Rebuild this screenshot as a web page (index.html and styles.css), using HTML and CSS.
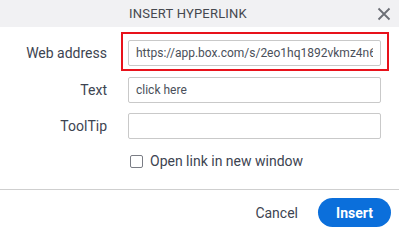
FILE: index.html
```html
<!DOCTYPE html>
<html lang="en">
<head>
    <meta charset="UTF-8">
    <meta name="viewport" content="width=device-width, initial-scale=1.0">
    <title>Insert Hyperlink</title>
    <link rel="stylesheet" href="styles.css">
</head>
<body>
    <div class="dialog">
        <div class="dialog-header">
            <span class="dialog-title">INSERT HYPERLINK</span>
            <button class="close-btn" aria-label="Close">
                <svg width="14" height="14" viewBox="0 0 14 14">
                    <path d="M1.5 1.5 L12.5 12.5 M12.5 1.5 L1.5 12.5" stroke="#6b6e75" stroke-width="1.8" fill="none"/>
                </svg>
            </button>
        </div>

        <div class="dialog-body">
            <div class="form-grid">
                <label class="field-label" for="url">Web address</label>
                <input class="field-input" id="url" type="text" value="https://app.box.com/s/2eo1hq1892vkmz4n6t">

                <label class="field-label" for="text">Text</label>
                <input class="field-input" id="text" type="text" value="click here">

                <label class="field-label" for="tooltip">ToolTip</label>
                <input class="field-input" id="tooltip" type="text" value="">

                <span></span>
                <label class="check-row">
                    <span class="check-box"></span>
                    Open link in new window
                </label>
            </div>
            <!-- annotation around the first field -->
            <div class="highlight"></div>
        </div>

        <div class="dialog-footer">
            <button class="btn-cancel">Cancel</button>
            <button class="btn-insert">Insert</button>
        </div>
    </div>
</body>
</html>
```

FILE: styles.css
```css
* {
    margin: 0;
    padding: 0;
    box-sizing: border-box;
}

body {
    font-family: Roboto, 'Liberation Sans', sans-serif;
    background: #fff;
    color: #3d4451;
}

.dialog {
    width: 399px;
    height: 233px;
    background: #fff;
    position: relative;
}

.dialog-header {
    height: 27px;
    background: #f1f1f3;
    display: flex;
    align-items: center;
    justify-content: center;
    padding-right: 23px;
    position: relative;
}

.dialog-title {
    font-size: 13px;
    color: #45484f;
    letter-spacing: 0.2px;
}

.close-btn {
    position: absolute;
    right: 8px;
    top: 7px;
    width: 14px;
    height: 14px;
    border: none;
    background: none;
    display: flex;
}

.dialog-body {
    position: relative;
    padding-top: 13px;
    height: 161px;
}

.form-grid {
    display: grid;
    grid-template-columns: 107px 253px;
    grid-template-rows: 26px 26px 26px 20px;
    column-gap: 21px;
    row-gap: 10.5px;
    align-items: center;
}

.form-grid .check-row {
    margin-top: 3px;
}

.field-label {
    font-size: 14px;
    text-align: right;
    color: #3d4451;
}

.field-input {
    height: 26px;
    width: 253px;
    border: 1px solid #c9c9c9;
    border-radius: 2px;
    padding: 0 7px;
    font-family: Roboto, 'Liberation Sans', sans-serif;
    font-size: 12px;
    color: #4a4f5a;
    outline: none;
}

.check-row {
    display: flex;
    align-items: center;
    gap: 7px;
    font-size: 14px;
    color: #3d4451;
    padding-left: 2px;
}

.check-box {
    width: 13px;
    height: 13px;
    border: 1px solid #7a7d85;
    border-radius: 2px;
    background: #fff;
}

.highlight {
    position: absolute;
    left: 121px;
    top: 5px;
    width: 268px;
    height: 39px;
    border: 2px solid #e8121b;
    pointer-events: none;
}

.dialog-footer {
    border-top: 1px solid #cfcfcf;
    margin-top: 1px;
    display: flex;
    justify-content: flex-end;
    align-items: center;
    gap: 20px;
    padding: 8px 8px 0 0;
}

.btn-cancel {
    border: none;
    background: none;
    font-family: Roboto, 'Liberation Sans', sans-serif;
    font-size: 14px;
    color: #3d4451;
}

.btn-insert {
    height: 29px;
    width: 73px;
    border: none;
    border-radius: 15px;
    background: #0b6fdb;
    color: #fff;
    font-family: Roboto, 'Liberation Sans', sans-serif;
    font-size: 14px;
    font-weight: 700;
}
```
